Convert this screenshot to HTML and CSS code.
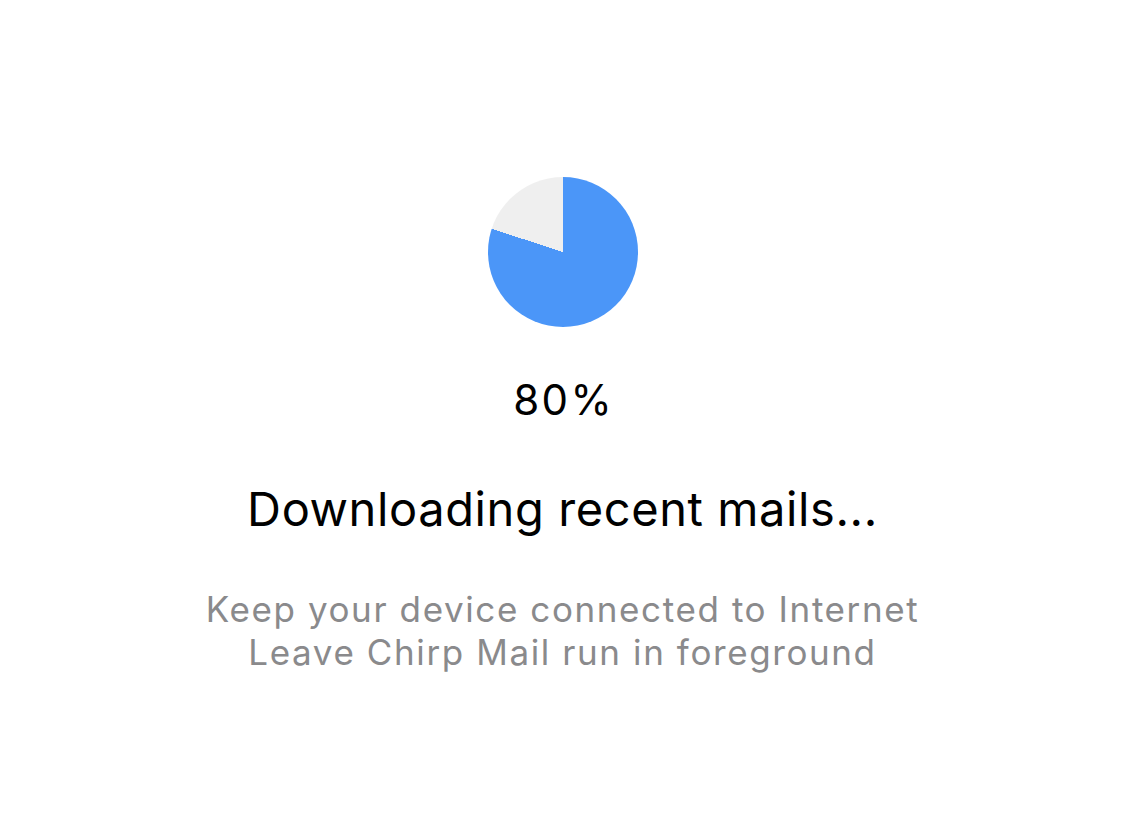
FILE: index.html
```html
<!DOCTYPE html>
<html lang="en">
  <head>
    <meta charset="UTF-8" />
    <meta name="viewport" content="width=device-width, initial-scale=1.0" />
    <title>Chirp Mail - Syncing</title>
    <link rel="stylesheet" href="styles.css">
  </head>
  <body>
    <main class="sync-screen">
      <div class="progress-pie" role="progressbar" aria-valuenow="80" aria-valuemin="0" aria-valuemax="100"></div>
      <div class="progress-value">80%</div>
      <h1 class="sync-title">Downloading recent mails...</h1>
      <p class="sync-hint">
        Keep your device connected to Internet<br />
        Leave Chirp Mail run in foreground
      </p>
    </main>
  </body>
</html>
```

FILE: styles.css
```css
:root {
  --pie-fill: #4b96f8;
  --pie-track: #efefef;
  --dark-text: #000000;
  --muted-text: #8a8a8c;
}

* {
  box-sizing: border-box;
  margin: 0;
  padding: 0;
}

body {
  font-family: Inter, "Noto Sans", sans-serif;
  background: #ffffff;
  color: var(--dark-text);
  min-height: 100vh;
}

.sync-screen {
  display: flex;
  flex-direction: column;
  align-items: center;
  text-align: center;
  padding-top: 177px;
}

.progress-pie {
  width: 150px;
  height: 150px;
  border-radius: 50%;
  background: conic-gradient(var(--pie-fill) 0 80%, var(--pie-track) 0);
}

.progress-value {
  margin-top: 48px;
  font-size: 42px;
  line-height: 50px;
  letter-spacing: 2.5px;
  text-indent: 2.5px;
}

.sync-title {
  margin-top: 56px;
  font-size: 47px;
  line-height: 56px;
  font-weight: 400;
  letter-spacing: 0.6px;
}

.sync-hint {
  margin-top: 51px;
  font-size: 35px;
  line-height: 42.5px;
  letter-spacing: 1.6px;
  color: var(--muted-text);
}
```
